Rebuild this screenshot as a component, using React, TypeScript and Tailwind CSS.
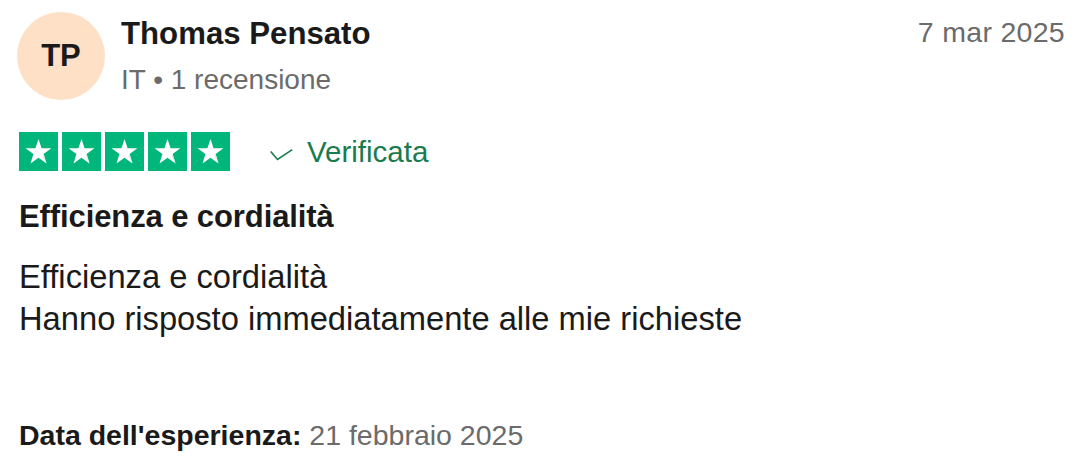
import React from "react";

function Star() {
  return (
    <div className="w-[39px] h-[39px] bg-[#00b67a] flex items-center justify-center">
      <svg width="39" height="39" viewBox="0 0 39 39">
        <polygon
          points="19.5,7 22.6,16.2 32.4,16.3 24.6,22.1 27.5,31.4 19.5,25.8 11.5,31.4 14.4,22.1 6.6,16.3 16.4,16.2"
          fill="#ffffff"
        />
        <polygon points="23.4,24.6 24.6,22.1 27.5,31.4" fill="#dcefe6" />
      </svg>
    </div>
  );
}

export default function App() {
  return (
    <div
      className="w-[1080px] h-[460px] bg-white pl-[19px] pr-[15px] pt-[11px] text-[#1a1a1a]"
      style={{ fontFamily: '"Liberation Sans", Arial, sans-serif' }}
    >
      <div className="flex items-start justify-between">
        <div className="flex items-start">
          <div className="-ml-[2px] mt-[1px] w-[88px] h-[88px] rounded-full bg-[#fde0c6] flex items-center justify-center text-[31px] font-bold">
            TP
          </div>
          <div className="ml-[16px] flex flex-col">
            <div className="text-[31.2px] leading-[46px] font-bold">Thomas Pensato</div>
            <div className="mt-[2px] text-[28px] leading-[42px] text-[#6b6b6b]">IT • 1 recensione</div>
          </div>
        </div>
        <div className="text-[28.5px] leading-[42px] text-[#6b6b6b] tracking-[0.3px]">7 mar 2025</div>
      </div>

      <div className="mt-[31px] flex items-center h-[39px]">
        <div className="flex gap-[4px]">
          <Star />
          <Star />
          <Star />
          <Star />
          <Star />
        </div>
        <div className="ml-[40px] flex items-center text-[#197c4f]">
          <svg width="23" height="12" viewBox="0 0 23 12" className="mt-[6px]">
            <polyline points="0.7,2.5 7.5,10.5 22.3,0.7" fill="none" stroke="#197c4f" strokeWidth="1.6" />
          </svg>
          <span className="ml-[14px] text-[29.5px] leading-[42px]">Verificata</span>
        </div>
      </div>

      <div className="mt-[23px] text-[31px] leading-[46px] font-bold tracking-[-0.1px]">Efficienza e cordialità</div>

      <div className="mt-[16px] text-[32.7px] leading-[42px]">
        <div>Efficienza e cordialità</div>
        <div>Hanno risposto immediatamente alle mie richieste</div>
      </div>

      <div className="mt-[74px] text-[28.5px] leading-[42px]">
        <span className="font-bold">Data dell'esperienza:</span>{" "}
        <span className="text-[#6b6b6b]">21 febbraio 2025</span>
      </div>
    </div>
  );
}
